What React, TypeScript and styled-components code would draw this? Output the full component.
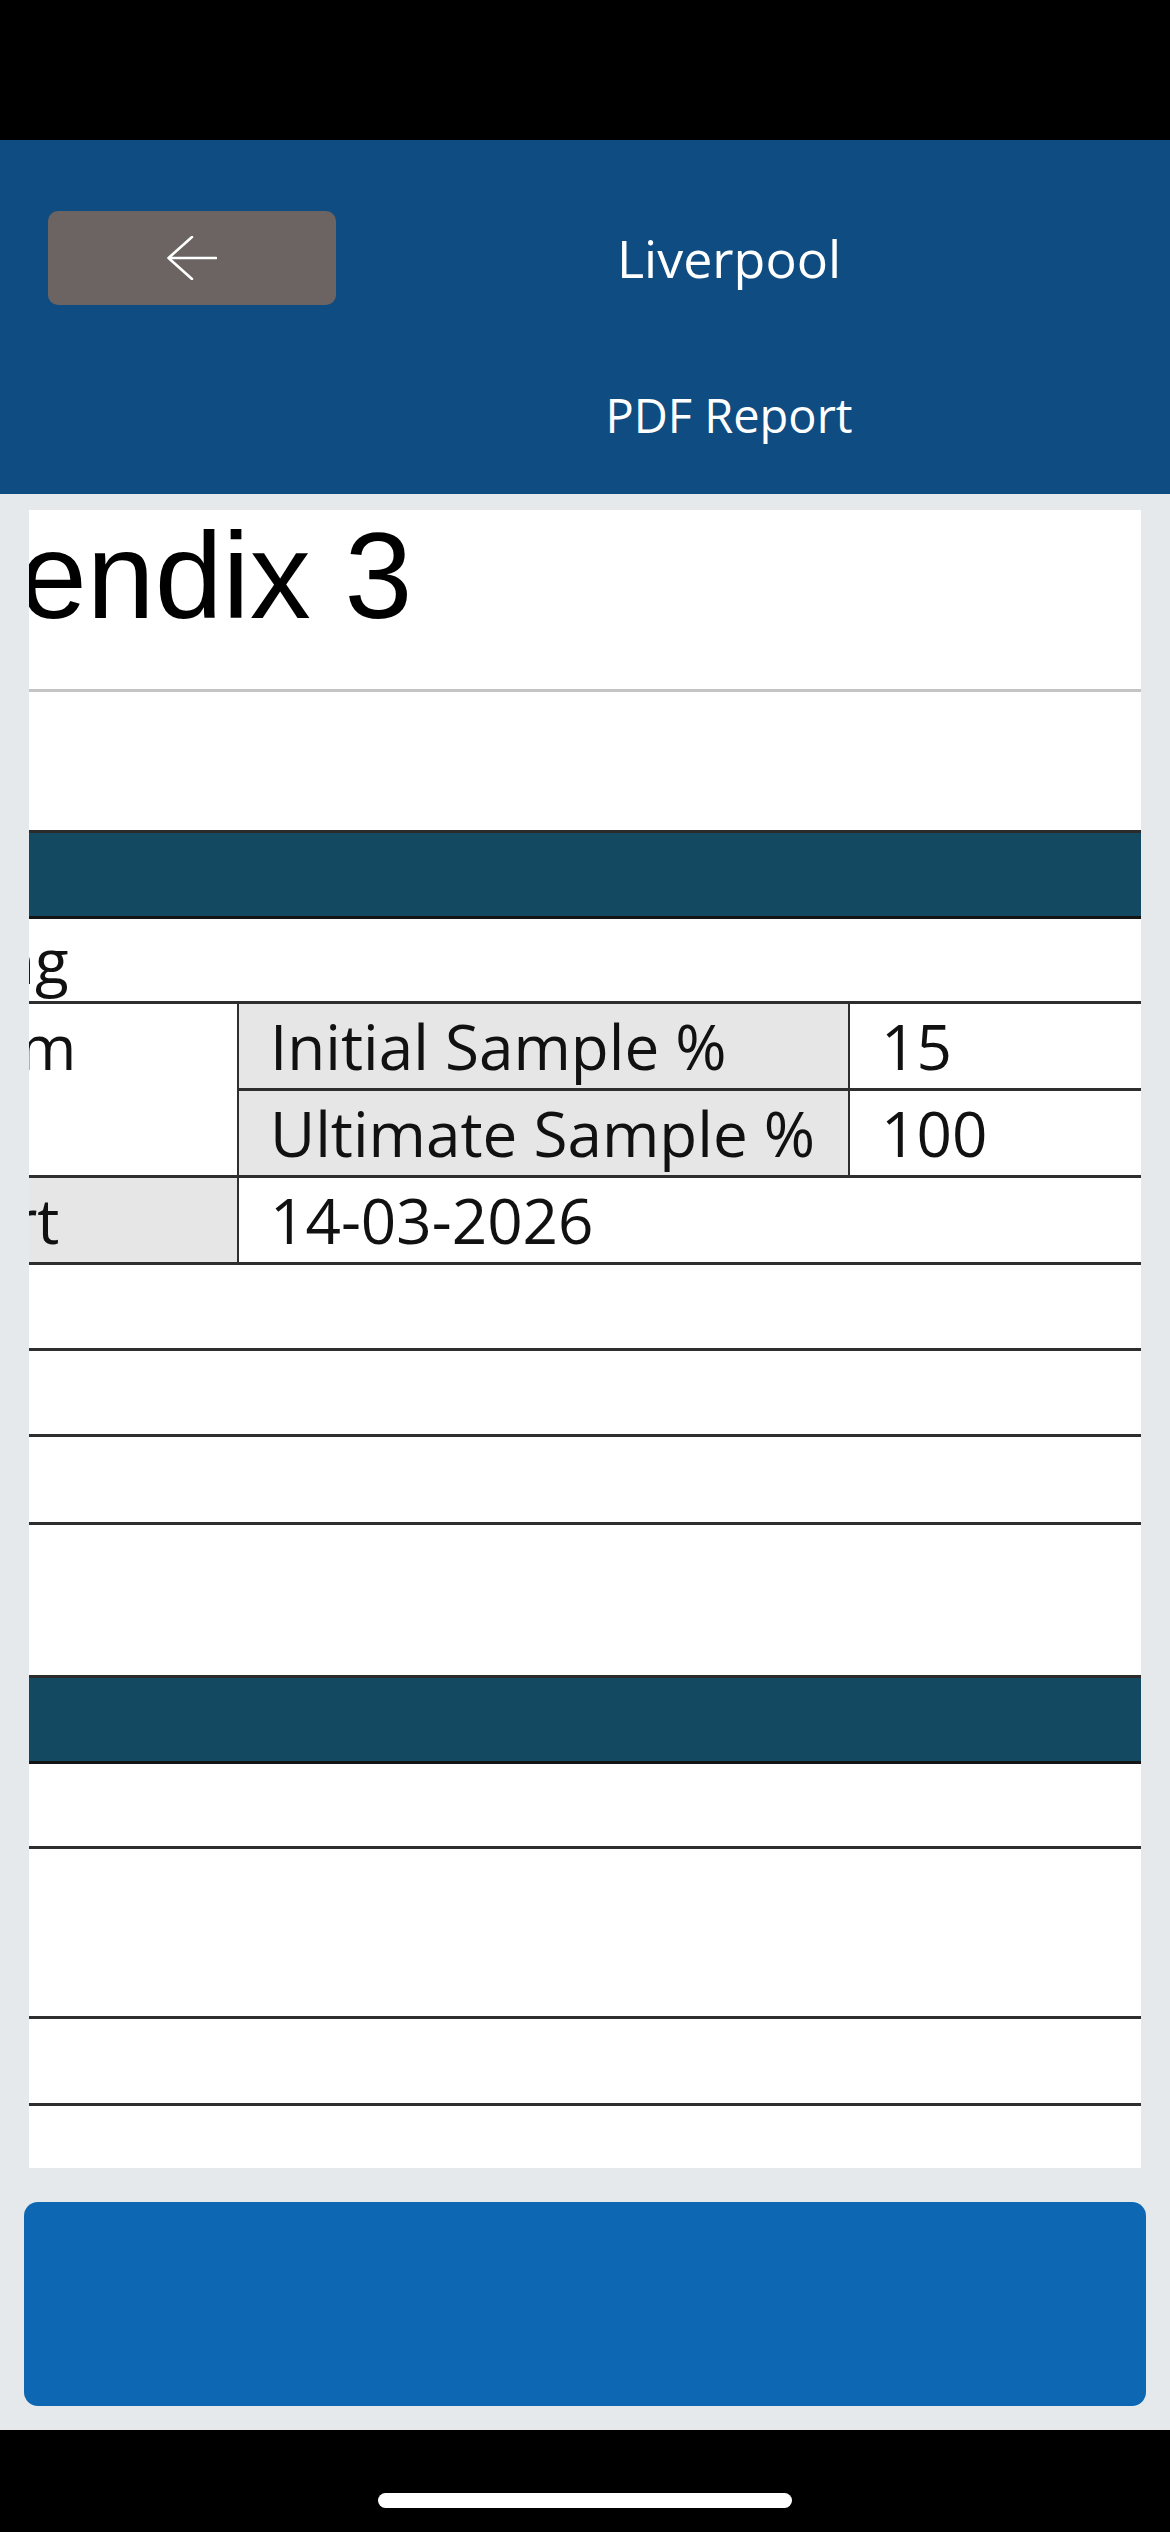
import styled, { createGlobalStyle } from "styled-components";

const GlobalStyle = createGlobalStyle`
  html, body {
    margin: 0;
    padding: 0;
    background: #000;
  }
  * {
    box-sizing: border-box;
  }
`;

const Screen = styled.div`
  width: 1170px;
  height: 2532px;
  display: flex;
  flex-direction: column;
  background: #000;
  font-family: "Open Sans", "Noto Sans", sans-serif;
  overflow: hidden;
`;

const StatusBar = styled.div`
  height: 140px;
  flex: none;
  background: #000;
`;

const Header = styled.header`
  display: grid;
  grid-template-columns: 288px 1fr;
  row-gap: 78px;
  padding: 71px 48px 47px;
  background: #0f4c82;
  color: #fff;
`;

const BackButton = styled.button`
  height: 94px;
  border: none;
  border-radius: 10px;
  background: #6b6462;
  display: flex;
  align-items: center;
  justify-content: center;
  padding: 0;
`;

const Title = styled.h1`
  margin: 0;
  font-weight: 400;
  font-size: 52px;
  line-height: 94px;
  text-align: center;
`;

const Subtitle = styled.h2`
  grid-column: 2;
  margin: 0;
  font-weight: 400;
  font-size: 47px;
  line-height: 64px;
  text-align: center;
`;

const Body = styled.main`
  flex: 1;
  display: flex;
  flex-direction: column;
  gap: 34px;
  padding: 16px 24px 24px;
  background: #e5e9ec;
`;

// the PDF sheet, scrolled so its left part is out of view
const Page = styled.section`
  height: 1658px;
  margin: 0 5px;
  background: #fff;
  overflow: hidden;
  color: #111;
`;

const DocTitle = styled.div`
  height: 182px;
  padding-top: 5px;
  border-bottom: 3px solid #c4c4c4;
  font-family: "Liberation Sans", Arial, sans-serif;
  font-size: 122px;
  line-height: 122px;
  color: #000;
  text-indent: -10px;
  white-space: nowrap;
`;

const Gap = styled.div<{ $h: number }>`
  height: ${(p) => p.$h}px;
`;

const Band = styled.div`
  height: 89px;
  background: #134a62;
  border-top: 3px solid #2b2b2b;
  border-bottom: 3px solid #141414;
`;

const Row = styled.div<{ $h: number }>`
  height: ${(p) => p.$h}px;
  border-bottom: 3px solid #2e2e2e;
  font-size: 62px;
  line-height: ${(p) => p.$h - 3}px;
  white-space: nowrap;
`;

const Clipped = styled.span<{ $shift: number }>`
  display: inline-block;
  margin-left: ${(p) => p.$shift}px;
`;

const Grid = styled.div`
  display: grid;
  grid-template-columns: 208px 611px 1fr;
  grid-auto-rows: 87px;
  font-size: 62px;
  line-height: 84px;
  white-space: nowrap;
`;

const Cell = styled.div<{ $grey?: boolean; $edge?: boolean; $rows?: number; $cols?: number }>`
  border-bottom: 3px solid #2e2e2e;
  border-left: ${(p) => (p.$edge ? "none" : "2px solid #2e2e2e")};
  background: ${(p) => (p.$grey ? "#e6e6e6" : "#fff")};
  padding-left: ${(p) => (p.$edge ? 0 : 31)}px;
  overflow: hidden;
  grid-row: span ${(p) => p.$rows ?? 1};
  grid-column: span ${(p) => p.$cols ?? 1};
`;

const SubmitButton = styled.button`
  height: 204px;
  border: none;
  border-radius: 14px;
  background: #0d67b3;
`;

const HomeArea = styled.div`
  height: 102px;
  flex: none;
  display: flex;
  justify-content: center;
  padding-top: 63px;
  background: #000;
`;

const HomeIndicator = styled.div`
  width: 414px;
  height: 15px;
  border-radius: 8px;
  background: #fff;
`;

function BackArrow() {
  return (
    <svg width="50" height="44" viewBox="-1 -1 50 44" fill="none">
      <path
        d="M24 0 L0.5 21 L24 42 M0.5 21 H48"
        stroke="#fff"
        strokeWidth="2.6"
        strokeLinecap="round"
        strokeLinejoin="round"
      />
    </svg>
  );
}

export default function App() {
  return (
    <Screen>
      <GlobalStyle />
      <StatusBar />
      <Header>
        <BackButton aria-label="Back">
          <BackArrow />
        </BackButton>
        <Title>Liverpool</Title>
        <Subtitle>PDF Report</Subtitle>
      </Header>

      <Body>
        <Page>
          <DocTitle>endix 3</DocTitle>
          <Gap $h={138} />
          <Band />
          <Row $h={85}>
            <Clipped $shift={-32}>ng</Clipped>
          </Row>
          <Grid>
            <Cell $edge $rows={2}>
              <Clipped $shift={-10}>m</Clipped>
            </Cell>
            <Cell $grey>Initial Sample %</Cell>
            <Cell>15</Cell>
            <Cell $grey>Ultimate Sample %</Cell>
            <Cell>100</Cell>
            <Cell $edge $grey>
              <Clipped $shift={-17}>rt</Clipped>
            </Cell>
            <Cell $cols={2}>14-03-2026</Cell>
          </Grid>
          <Row $h={86} />
          <Row $h={86} />
          <Row $h={88} />
          <Gap $h={150} />
          <Band />
          <Row $h={85} />
          <Row $h={170} />
          <Row $h={87} />
        </Page>
        <SubmitButton aria-label="Submit" />
      </Body>

      <HomeArea>
        <HomeIndicator />
      </HomeArea>
    </Screen>
  );
}
